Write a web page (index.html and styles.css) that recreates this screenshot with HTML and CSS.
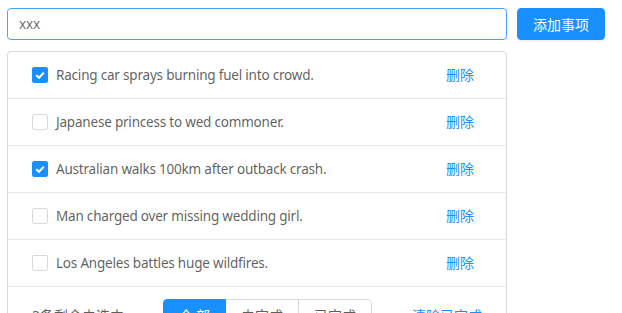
FILE: index.html
```html
<!DOCTYPE html>
<html lang="zh">
<head>
<meta charset="utf-8">
<title>Todo</title>
<link rel="stylesheet" href="styles.css">
</head>
<body>
<div class="app">
  <div class="header">
    <input class="todo-input" type="text" value="xxx">
    <button class="btn-primary">添加事项</button>
  </div>
  <div class="list">
    <div class="item">
      <span class="check checked"><svg viewBox="0 0 16 16" width="16" height="16"><path d="M4.2 8.2 L7 10.8 L11.8 5.6" fill="none" stroke="#fff" stroke-width="2"/></svg></span>
      <span class="text">Racing car sprays burning fuel into crowd.</span>
      <a class="action">删除</a>
    </div>
    <div class="item">
      <span class="check"></span>
      <span class="text">Japanese princess to wed commoner.</span>
      <a class="action">删除</a>
    </div>
    <div class="item">
      <span class="check checked"><svg viewBox="0 0 16 16" width="16" height="16"><path d="M4.2 8.2 L7 10.8 L11.8 5.6" fill="none" stroke="#fff" stroke-width="2"/></svg></span>
      <span class="text">Australian walks 100km after outback crash.</span>
      <a class="action">删除</a>
    </div>
    <div class="item">
      <span class="check"></span>
      <span class="text">Man charged over missing wedding girl.</span>
      <a class="action">删除</a>
    </div>
    <div class="item">
      <span class="check"></span>
      <span class="text">Los Angeles battles huge wildfires.</span>
      <a class="action">删除</a>
    </div>
    <div class="footer">
      <span class="count">3条剩余未选中</span>
      <div class="group">
        <button class="seg seg-active"><span class="two">全部</span></button>
        <button class="seg">未完成</button>
        <button class="seg">已完成</button>
      </div>
      <a class="clear">清除已完成</a>
    </div>
  </div>
</div>
</body>
</html>
```
FILE: styles.css
```css
html, body {
  margin: 0;
  padding: 0;
  background: #fff;
}
body {
  font-family: "Noto Sans", "Noto Sans CJK SC", sans-serif;
  font-size: 14px;
  color: rgba(0,0,0,0.65);
}
.app {
  padding: 8px 0 0 7px;
  width: 598px;
}
.header {
  display: flex;
  gap: 10px;
  align-items: flex-start;
}
.todo-input {
  box-sizing: border-box;
  width: 500px;
  height: 32px;
  border: 1px solid #40a9ff;
  border-radius: 4px;
  padding: 0 11px;
  font-family: "Noto Sans", "Noto Sans CJK SC", sans-serif;
  font-size: 13.5px;
  letter-spacing: -0.2px;
  color: rgba(0,0,0,0.6);
  outline: none;
  margin: 0;
}
.btn-primary {
  box-sizing: border-box;
  width: 88px;
  height: 32px;
  margin: 0;
  border: 1px solid #1890ff;
  border-radius: 4px;
  background: #1890ff;
  color: #fff;
  font-family: "Noto Sans CJK SC", sans-serif;
  font-size: 14px;
  padding: 0 15px;
  white-space: nowrap;
  box-shadow: 0 2px 0 rgba(0,0,0,0.045);
}
.list {
  box-sizing: border-box;
  width: 500px;
  margin-top: 11px;
  border: 1px solid #d9d9d9;
  border-radius: 4px;
  height: 300px;
  overflow: hidden;
}
.item {
  display: flex;
  align-items: center;
  height: 46px;
  padding: 0 24px;
  border-bottom: 1px solid #e8e8e8;
}
.check {
  box-sizing: border-box;
  width: 16px;
  height: 16px;
  border: 1px solid #d9d9d9;
  border-radius: 2px;
  background: #fff;
  flex: none;
  display: flex;
}
.check.checked {
  background: #1890ff;
  border-color: #1890ff;
}
.check svg {
  margin: -1px;
}
.text {
  margin-left: 8px;
  flex: 1;
  line-height: 22px;
  font-size: 13.5px;
  letter-spacing: -0.2px;
}
.action {
  color: #1890ff;
  font-family: "Noto Sans CJK SC", sans-serif;
  padding: 0 8px;
  line-height: 20px;
  margin-bottom: 2px;
}
.footer {
  display: flex;
  align-items: center;
  padding: 12px 24px;
}
.count {
  font-family: "Noto Sans", "Noto Sans CJK SC", sans-serif;
  width: 131px;
  white-space: nowrap;
}
.group {
  display: flex;
}
.seg {
  box-sizing: border-box;
  height: 32px;
  margin: 0 0 0 -1px;
  padding: 0 15px;
  border: 1px solid #d9d9d9;
  background: #fff;
  color: rgba(0,0,0,0.65);
  font-family: "Noto Sans CJK SC", sans-serif;
  font-size: 14px;
  white-space: nowrap;
}
.seg:first-child {
  margin-left: 0;
  border-radius: 4px 0 0 4px;
}
.seg:last-child {
  border-radius: 0 4px 4px 0;
}
.seg-active {
  background: #1890ff;
  border-color: #1890ff;
  color: #fff;
  position: relative;
  z-index: 1;
}
.two {
  letter-spacing: 3px;
  margin-right: -3px;
}
.clear {
  margin-left: auto;
  color: #1890ff;
  font-family: "Noto Sans CJK SC", sans-serif;
  white-space: nowrap;
}
```
